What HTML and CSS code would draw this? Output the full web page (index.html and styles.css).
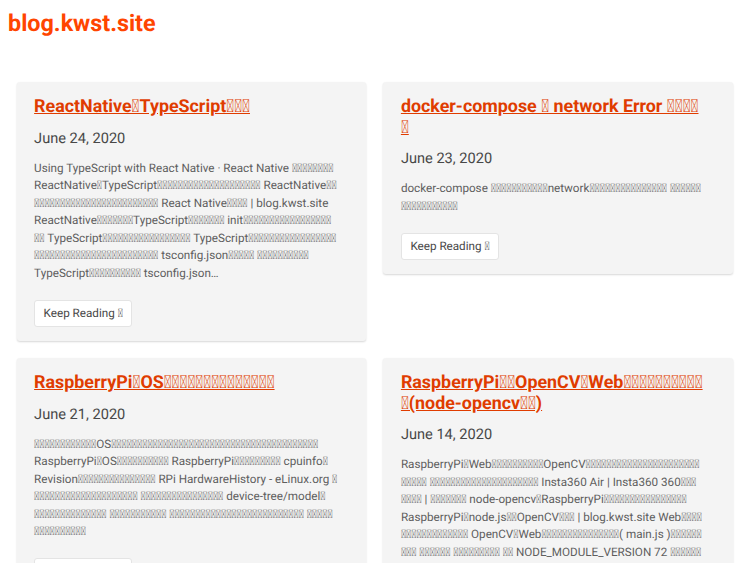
FILE: index.html
```html
<!DOCTYPE html>
<html lang="ja">
<head>
<meta charset="utf-8">
<title>blog.kwst.site</title>
<link rel="stylesheet" href="styles.css">
</head>
<body>
<header class="site-header"><a class="site-title" href="#">blog.kwst.site</a></header>
<main class="post-grid">
<article class="post">
<h2 class="post-title"><a href="#">ReactNative&#xE000;TypeScript&#xE000;&#xE000;&#xE000;</a></h2>
<p class="post-date">June 24, 2020</p>
<p class="post-excerpt">Using TypeScript with React Native · React Native &#xE000;&#xE000;&#xE000;&#xE000;&#xE000;&#xE000;&#xE000;&#xE000;<br>
ReactNative&#xE000;TypeScript&#xE000;&#xE000;&#xE000;&#xE000;&#xE000;&#xE000;&#xE000;&#xE000;&#xE000;&#xE000;&#xE000;&#xE000;&#xE000;&#xE000;&#xE000;&#xE000;&#xE000;&#xE000;&#xE000;&#xE000; ReactNative&#xE000;&#xE000;<br>
&#xE000;&#xE000;&#xE000;&#xE000;&#xE000;&#xE000;&#xE000;&#xE000;&#xE000;&#xE000;&#xE000;&#xE000;&#xE000;&#xE000;&#xE000;&#xE000;&#xE000;&#xE000;&#xE000;&#xE000;&#xE000;&#xE000;&#xE000;&#xE000; React Native&#xE000;&#xE000;&#xE000;&#xE000; | blog.kwst.site<br>
ReactNative&#xE000;&#xE000;&#xE000;&#xE000;&#xE000;&#xE000;&#xE000;TypeScript&#xE000;&#xE000;&#xE000;&#xE000;&#xE000;&#xE000;&#xE000; init&#xE000;&#xE000;&#xE000;&#xE000;&#xE000;&#xE000;&#xE000;&#xE000;&#xE000;&#xE000;&#xE000;&#xE000;&#xE000;&#xE000;&#xE000;&#xE000;&#xE000;<br>
&#xE000;&#xE000; TypeScript&#xE000;&#xE000;&#xE000;&#xE000;&#xE000;&#xE000;&#xE000;&#xE000;&#xE000;&#xE000;&#xE000;&#xE000;&#xE000;&#xE000;&#xE000;&#xE000;&#xE000; TypeScript&#xE000;&#xE000;&#xE000;&#xE000;&#xE000;&#xE000;&#xE000;&#xE000;&#xE000;&#xE000;&#xE000;&#xE000;&#xE000;&#xE000;&#xE000;&#xE000;&#xE000;<br>
&#xE000;&#xE000;&#xE000;&#xE000;&#xE000;&#xE000;&#xE000;&#xE000;&#xE000;&#xE000;&#xE000;&#xE000;&#xE000;&#xE000;&#xE000;&#xE000;&#xE000;&#xE000;&#xE000;&#xE000;&#xE000;&#xE000;&#xE000;&#xE000; tsconfig.json&#xE000;&#xE000;&#xE000;&#xE000;&#xE000; &#xE000;&#xE000;&#xE000;&#xE000;&#xE000;&#xE000;&#xE000;&#xE000;&#xE000;&#xE000;<br>
TypeScript&#xE000;&#xE000;&#xE000;&#xE000;&#xE000;&#xE000;&#xE000;&#xE000;&#xE000;&#xE000; tsconfig.json…</p>
<a class="read-more" href="#">Keep Reading &#xE000;</a>
</article>
<article class="post">
<h2 class="post-title"><a href="#">docker-compose &#xE000; network Error &#xE000;&#xE000;&#xE000;&#xE000;<br>&#xE000;</a></h2>
<p class="post-date">June 23, 2020</p>
<p class="post-excerpt">docker-compose &#xE000;&#xE000;&#xE000;&#xE000;&#xE000;&#xE000;&#xE000;&#xE000;&#xE000;&#xE000;&#xE000;network&#xE000;&#xE000;&#xE000;&#xE000;&#xE000;&#xE000;&#xE000;&#xE000;&#xE000;&#xE000;&#xE000;&#xE000;&#xE000;&#xE000;&#xE000; &#xE000;&#xE000;&#xE000;&#xE000;&#xE000;&#xE000;<br>
&#xE000;&#xE000;&#xE000;&#xE000;&#xE000;&#xE000;&#xE000;&#xE000;&#xE000;&#xE000;&#xE000;</p>
<a class="read-more" href="#">Keep Reading &#xE000;</a>
</article>
<article class="post">
<h2 class="post-title"><a href="#">RaspberryPi&#xE000;OS&#xE000;&#xE000;&#xE000;&#xE000;&#xE000;&#xE000;&#xE000;&#xE000;&#xE000;&#xE000;&#xE000;&#xE000;&#xE000;&#xE000;</a></h2>
<p class="post-date">June 21, 2020</p>
<p class="post-excerpt">&#xE000;&#xE000;&#xE000;&#xE000;&#xE000;&#xE000;&#xE000;&#xE000;&#xE000;&#xE000;&#xE000;&#xE000;OS&#xE000;&#xE000;&#xE000;&#xE000;&#xE000;&#xE000;&#xE000;&#xE000;&#xE000;&#xE000;&#xE000;&#xE000;&#xE000;&#xE000;&#xE000;&#xE000;&#xE000;&#xE000;&#xE000;&#xE000;&#xE000;&#xE000;&#xE000;&#xE000;&#xE000;&#xE000;&#xE000;&#xE000;&#xE000;&#xE000;&#xE000;&#xE000;&#xE000;&#xE000;&#xE000;&#xE000;&#xE000;&#xE000;&#xE000;&#xE000;<br>
RaspberryPi&#xE000;OS&#xE000;&#xE000;&#xE000;&#xE000;&#xE000;&#xE000;&#xE000;&#xE000;&#xE000;&#xE000; RaspberryPi&#xE000;&#xE000;&#xE000;&#xE000;&#xE000;&#xE000;&#xE000;&#xE000;&#xE000; cpuinfo&#xE000;<br>
Revision&#xE000;&#xE000;&#xE000;&#xE000;&#xE000;&#xE000;&#xE000;&#xE000;&#xE000;&#xE000;&#xE000;&#xE000;&#xE000;&#xE000;&#xE000; RPi HardwareHistory - eLinux.org &#xE000;<br>
&#xE000;&#xE000;&#xE000;&#xE000;&#xE000;&#xE000;&#xE000;&#xE000;&#xE000;&#xE000;&#xE000;&#xE000;&#xE000;&#xE000;&#xE000;&#xE000;&#xE000;&#xE000;&#xE000;&#xE000; &#xE000;&#xE000;&#xE000;&#xE000;&#xE000;&#xE000;&#xE000;&#xE000;&#xE000;&#xE000;&#xE000;&#xE000;&#xE000;&#xE000;&#xE000;&#xE000; device-tree/model&#xE000;<br>
&#xE000;&#xE000;&#xE000;&#xE000;&#xE000;&#xE000;&#xE000;&#xE000;&#xE000;&#xE000;&#xE000;&#xE000;&#xE000;&#xE000; &#xE000;&#xE000;&#xE000;&#xE000;&#xE000;&#xE000;&#xE000;&#xE000;&#xE000;&#xE000;&#xE000; &#xE000;&#xE000;&#xE000;&#xE000;&#xE000;&#xE000;&#xE000;&#xE000;&#xE000;&#xE000;&#xE000;&#xE000;&#xE000;&#xE000;&#xE000;&#xE000;&#xE000;&#xE000;&#xE000;&#xE000;&#xE000;&#xE000;&#xE000;&#xE000;&#xE000;&#xE000; &#xE000;&#xE000;&#xE000;&#xE000;&#xE000;<br>
&#xE000;&#xE000;&#xE000;&#xE000;&#xE000;&#xE000;&#xE000;&#xE000;&#xE000;&#xE000;</p>
<a class="read-more" href="#">Keep Reading &#xE000;</a>
</article>
<article class="post">
<h2 class="post-title"><a href="#">RaspberryPi&#xE000;&#xE000;OpenCV&#xE000;Web&#xE000;&#xE000;&#xE000;&#xE000;&#xE000;&#xE000;&#xE000;&#xE000;&#xE000;&#xE000;<br>&#xE000;(node-opencv&#xE000;&#xE000;)</a></h2>
<p class="post-date">June 14, 2020</p>
<p class="post-excerpt">RaspberryPi&#xE000;Web&#xE000;&#xE000;&#xE000;&#xE000;&#xE000;&#xE000;&#xE000;&#xE000;&#xE000;&#xE000;OpenCV&#xE000;&#xE000;&#xE000;&#xE000;&#xE000;&#xE000;&#xE000;&#xE000;&#xE000;&#xE000;&#xE000;&#xE000;&#xE000;&#xE000;&#xE000;&#xE000;&#xE000;&#xE000;&#xE000;&#xE000;&#xE000;&#xE000;<br>
&#xE000;&#xE000;&#xE000;&#xE000;&#xE000; &#xE000;&#xE000;&#xE000;&#xE000;&#xE000;&#xE000;&#xE000;&#xE000;&#xE000;&#xE000;&#xE000;&#xE000;&#xE000;&#xE000;&#xE000;&#xE000;&#xE000;&#xE000;&#xE000;&#xE000;&#xE000; Insta360 Air | Insta360 360&#xE000;&#xE000;&#xE000;<br>
&#xE000;&#xE000;&#xE000;&#xE000; | &#xE000;&#xE000;&#xE000;&#xE000;&#xE000;&#xE000;&#xE000; node-opencv&#xE000;RaspberryPi&#xE000;&#xE000;&#xE000;&#xE000;&#xE000;&#xE000;&#xE000;&#xE000;&#xE000;&#xE000;&#xE000;&#xE000;&#xE000;&#xE000;&#xE000;&#xE000;<br>
RaspberryPi&#xE000;node.js&#xE000;&#xE000;OpenCV&#xE000;&#xE000;&#xE000; | blog.kwst.site Web&#xE000;&#xE000;&#xE000;&#xE000;<br>
&#xE000;&#xE000;&#xE000;&#xE000;&#xE000;&#xE000;&#xE000;&#xE000;&#xE000;&#xE000;&#xE000;&#xE000;&#xE000; OpenCV&#xE000;Web&#xE000;&#xE000;&#xE000;&#xE000;&#xE000;&#xE000;&#xE000;&#xE000;&#xE000;&#xE000;&#xE000;&#xE000;&#xE000;&#xE000;&#xE000;( main.js )&#xE000;&#xE000;&#xE000;&#xE000;&#xE000;&#xE000;<br>
&#xE000;&#xE000;&#xE000; &#xE000;&#xE000;&#xE000;&#xE000;&#xE000;&#xE000; &#xE000;&#xE000;&#xE000;&#xE000;&#xE000;&#xE000;&#xE000;&#xE000;&#xE000; &#xE000;&#xE000; NODE_MODULE_VERSION 72 &#xE000;&#xE000;&#xE000;&#xE000;&#xE000;&#xE000;</p>
<a class="read-more" href="#">Keep Reading &#xE000;</a>
</article>
</main>
</body>
</html>
```
FILE: styles.css
```css
* { box-sizing: border-box; }
html, body { margin: 0; padding: 0; }
body {
  font-family: Roboto;
  background: #fff;
  color: #444;
  text-rendering: geometricPrecision;
}
.site-header { padding: 7px 8px 0; height: 82px; }
.site-title {
  font-size: 23.36px;
  line-height: 32px;
  font-weight: 700;
  color: #ff4500;
  text-decoration: none;
}
.post-grid {
  display: grid;
  grid-template-columns: 349.4px 349.4px;
  column-gap: 17.4px;
  row-gap: 17px;
  padding-left: 16.6px;
  align-items: start;
}
.post {
  background: #f4f4f4;
  border-radius: 3px;
  box-shadow: 0 1px 2px rgba(0, 0, 0, 0.16);
  padding: 15px 17.5px 14.5px;
}
.post-title {
  margin: 0;
  font-size: 17.86px;
  line-height: 20.5px;
  font-weight: 700;
}
.post-title a { color: #e03c00; }
.post-date {
  margin: 11px 0 0;
  font-size: 14.6px;
  line-height: 19px;
  color: #484848;
}
.post-excerpt {
  margin: 12px 0 0;
  font-size: 11.68px;
  line-height: 17.52px;
  color: #5e5e5e;
}
.read-more {
  display: inline-block;
  margin-top: 17.5px;
  padding: 3.5px 8.5px;
  font-size: 11.68px;
  line-height: 18px;
  color: #484848;
  background: #fff;
  border: 1px solid #e4e4e4;
  border-radius: 3px;
  text-decoration: none;
}
```
